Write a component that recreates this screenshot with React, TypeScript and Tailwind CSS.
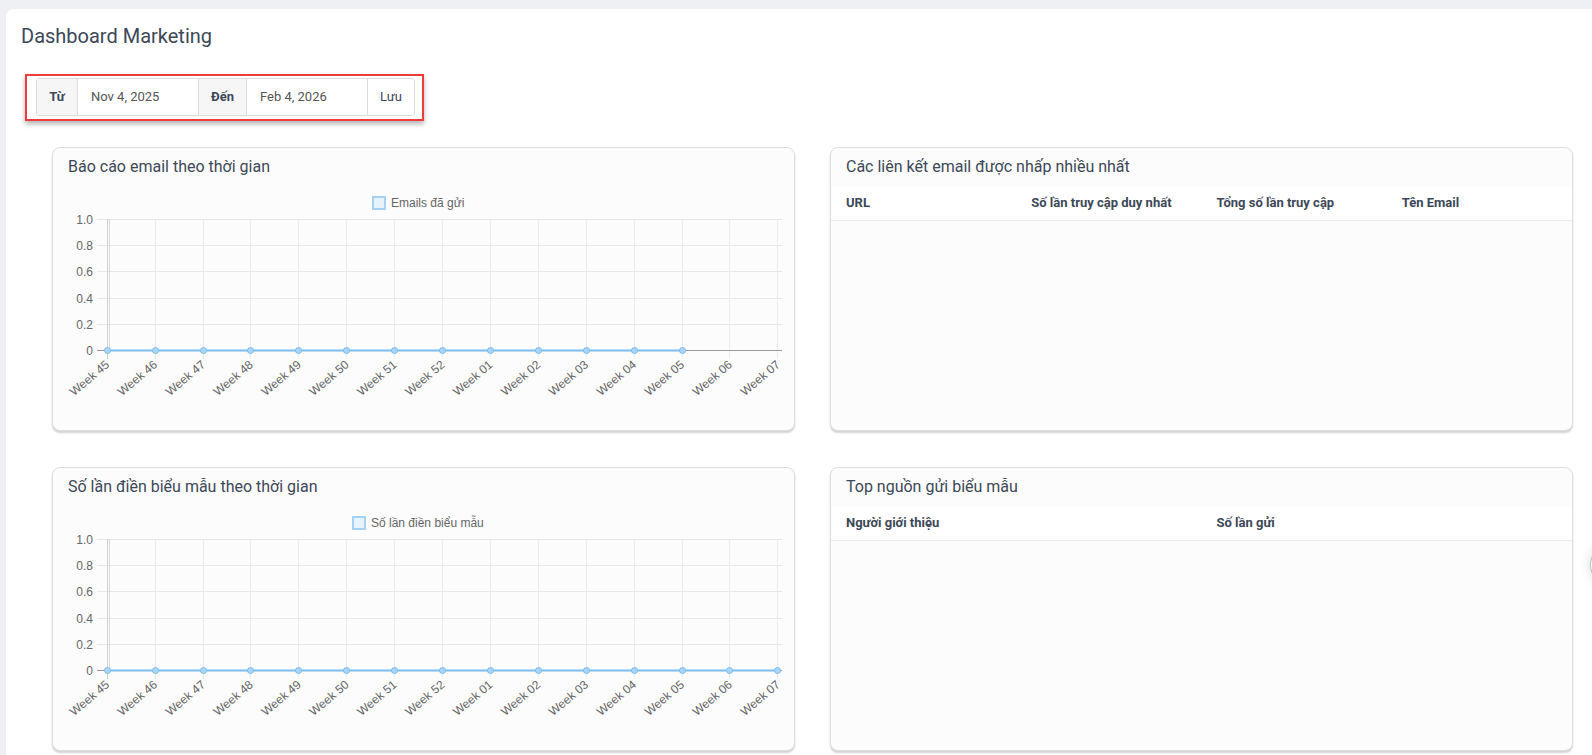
const weeks = [
  "Week 45",
  "Week 46",
  "Week 47",
  "Week 48",
  "Week 49",
  "Week 50",
  "Week 51",
  "Week 52",
  "Week 01",
  "Week 02",
  "Week 03",
  "Week 04",
  "Week 05",
  "Week 06",
  "Week 07",
];

const yTicks = ["1.0", "0.8", "0.6", "0.4", "0.2", "0"];

// chart.js-like line chart, empty data (all zeros)
function LineChart({ label, legendX, points }: { label: string; legendX: number; points: number }) {
  const x0 = 53.7;
  const step = 47.9;
  const top = 33;
  const rowH = 26.2;
  const zeroY = top + rowH * 5;
  const right = 729;
  const xs = weeks.map((_, i) => x0 + i * step);
  const zy = Math.round(zeroY) + 0.5;

  return (
    <svg width="741" height="244" className="block font-['Liberation_Sans',Arial,sans-serif]">
      <rect x={legendX + 1} y={11} width={12} height={12} fill="#e6f2fc" stroke="#a3d2f6" strokeWidth="2" />
      <text x={legendX + 19} y={21} fontSize="12" fill="#666">
        {label}
      </text>
      {yTicks.map((t, i) => {
        const y = Math.round(top + i * rowH) + 0.5;
        return (
          <g key={t}>
            <line x1={44} x2={right} y1={y} y2={y} stroke="#e6e6e6" />
            <text x={40} y={y + 4} textAnchor="end" fontSize="12" fill="#666">
              {t}
            </text>
          </g>
        );
      })}
      {xs.map((x, i) => (
        <line
          key={i}
          x1={Math.round(x) + 0.5}
          x2={Math.round(x) + 0.5}
          y1={top}
          y2={zeroY + 9}
          stroke={i === 0 ? "#d0d0d0" : "#ebebeb"}
        />
      ))}
      <line x1={Math.round(x0) + 2.5} x2={Math.round(x0) + 2.5} y1={top} y2={zeroY} stroke="#dadada" />
      <line x1={44} x2={right} y1={zy} y2={zy} stroke="#9a9a9a" />
      <line x1={xs[0]} x2={xs[points - 1]} y1={zy} y2={zy} stroke="#7dbcef" strokeWidth="2" />
      {xs.slice(0, points).map((x, i) => (
        <circle key={i} cx={Math.round(x) + 0.5} cy={zy} r="3" fill="#a9d5f7" stroke="#7dbcef" />
      ))}
      {weeks.map((w, i) => (
        <text
          key={w}
          x={xs[i] + 3.5}
          y={zeroY + 16}
          textAnchor="end"
          fontSize="12"
          fill="#666"
          transform={`rotate(-40 ${xs[i] + 3.5} ${zeroY + 16})`}
        >
          {w}
        </text>
      ))}
    </svg>
  );
}

function Card({ title, children }: { title: string; children: React.ReactNode }) {
  return (
    <div className="h-[284px] overflow-hidden rounded-[8px] border border-[#dedede] bg-[#fcfcfc] shadow-[0_2px_2px_rgba(0,0,0,0.18)]">
      <div className="flex h-[38px] items-center px-[15px] text-[16px] text-[#3c4858]">{title}</div>
      {children}
    </div>
  );
}

function TableHead({ cols }: { cols: string[] }) {
  return (
    <div className="flex h-[35px] items-center border-b border-[#e9e9e9] bg-white text-[13px] font-bold text-[#3c4858]">
      {cols.map((c) => (
        <div key={c} className="flex-1 px-[15px]">
          {c}
        </div>
      ))}
    </div>
  );
}

export default function App() {
  return (
    <div className="relative h-[755px] overflow-hidden bg-[#eef0f4] pl-[6px] pt-[9px] font-['Roboto','Noto_Sans',sans-serif]">
      <div className="h-[746px] overflow-hidden rounded-tl-[8px] bg-white pt-[15px]">
        <h1 className="pl-[15px] text-[20px] leading-[24px] text-[#3c4858]">Dashboard Marketing</h1>

        <div className="ml-[19px] mt-[26px] inline-block border-2 border-[#ef3b3b] pb-[3px] pl-[9px] pr-[7px] pt-[2px] shadow-[0_3px_5px_rgba(0,0,0,0.3)]">
          <div className="flex h-[38px] overflow-hidden rounded-[3px] border border-[#dcdcdc] text-[13px] text-[#3c4858]">
            <div className="flex w-[41px] items-center justify-center border-r border-[#dcdcdc] bg-[#f6f6f6] font-bold">
              Từ
            </div>
            <div className="flex w-[121px] items-center border-r border-[#dcdcdc] bg-white pl-[13px] text-[#555]">
              Nov 4, 2025
            </div>
            <div className="flex w-[48px] items-center justify-center border-r border-[#dcdcdc] bg-[#f6f6f6] font-bold">
              Đến
            </div>
            <div className="flex w-[121px] items-center border-r border-[#dcdcdc] bg-white pl-[13px] text-[#555]">
              Feb 4, 2026
            </div>
            <div className="flex w-[46px] items-center justify-center bg-white">Lưu</div>
          </div>
        </div>

        <div className="ml-[46px] mt-[26px] grid w-[1521px] grid-cols-2 gap-x-[35px] gap-y-[36px]">
          <Card title="Báo cáo email theo thời gian">
            <LineChart label="Emails đã gửi" legendX={319} points={13} />
          </Card>
          <Card title="Các liên kết email được nhấp nhiều nhất">
            <TableHead cols={["URL", "Số lần truy cập duy nhất", "Tổng số lần truy cập", "Tên Email"]} />
          </Card>
          <Card title="Số lần điền biểu mẫu theo thời gian">
            <LineChart label="Số lần điền biểu mẫu" legendX={299} points={15} />
          </Card>
          <Card title="Top nguồn gửi biểu mẫu">
            <TableHead cols={["Người giới thiệu", "Số lần gửi"]} />
          </Card>
        </div>
      </div>
      <div className="absolute right-0 top-[530px] h-[70px] w-[16px] overflow-hidden">
        <div className="ml-[14px] mt-[14px] h-[42px] w-[42px] rounded-full border border-[#b4bccb] bg-white shadow-[0_0_12px_rgba(0,0,0,0.15)]" />
      </div>
    </div>
  );
}
